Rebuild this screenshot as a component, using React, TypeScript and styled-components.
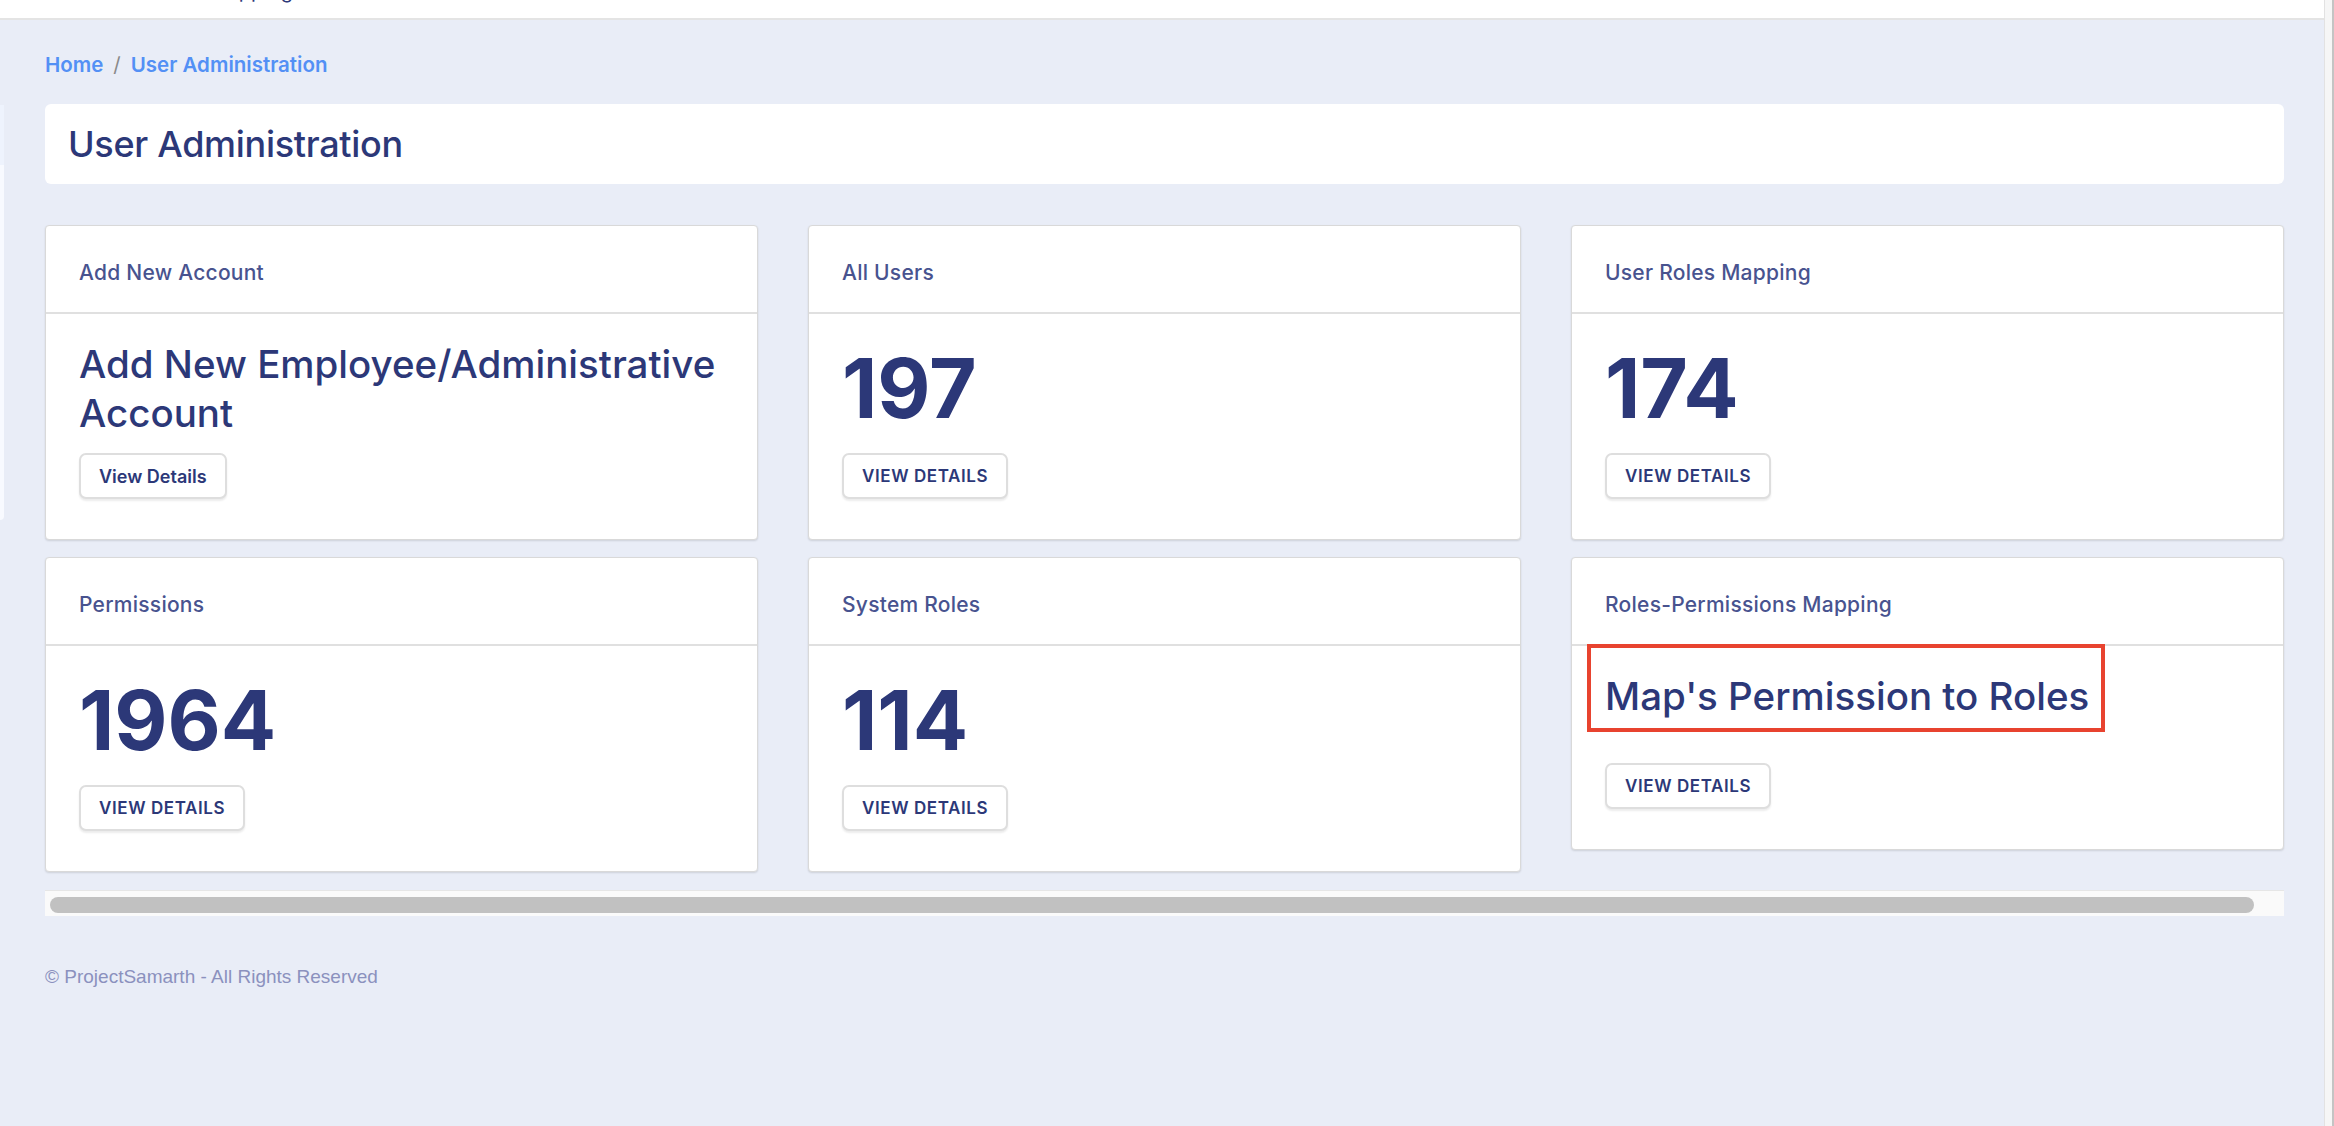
import React from "react";
import styled, { createGlobalStyle } from "styled-components";

const GlobalStyle = createGlobalStyle`
  html, body { margin: 0; padding: 0; }
  body {
    background: #e9edf7;
    font-family: Inter, "Noto Sans", sans-serif;
    overflow: hidden;
  }
  #root { min-height: 100vh; }
`;

const Frame = styled.div`
  display: flex;
  min-height: 100vh;
`;

const PageColumn = styled.div`
  flex: 1;
  min-width: 0;
  display: flex;
  flex-direction: column;
`;

const VScroll = styled.div`
  width: 9px;
  flex-shrink: 0;
  border-left: 1px solid #e2e2e2;
  background: #f6f6f6;
  box-shadow: inset -2px 0 0 #c4c4c4;
`;

const TopBar = styled.header`
  height: 18px;
  background: #ffffff;
  border-bottom: 2px solid #e4e4e4;
  overflow: hidden;
`;

const TopBarText = styled.div`
  font-size: 20px;
  line-height: 20px;
  margin-top: -19px;
  margin-left: -4px;
  color: #2c3878;
  white-space: nowrap;
  letter-spacing: 0.2px;
`;

const Body = styled.div`
  display: flex;
  flex: 1;
`;

const SideEdge = styled.div`
  width: 4px;
  height: 415px;
  margin-top: 85px;
  flex-shrink: 0;
  background: linear-gradient(#eef3fd 0 60px, #f8faff 60px);
  border-radius: 0 0 6px 0;
`;

const Main = styled.main`
  flex: 1;
  min-width: 0;
  padding: 31px 40px 0 41px;
`;

const Breadcrumb = styled.nav`
  display: flex;
  align-items: center;
  gap: 10px;
  font-size: 20.5px;
  line-height: 28px;
  font-weight: 600;
  color: #5390f5;
`;

const Crumb = styled.span``;

const CrumbSep = styled.span`
  color: #8a8a8a;
  font-weight: 400;
`;

const TitleCard = styled.div`
  margin-top: 25px;
  height: 80px;
  padding: 0 23px;
  display: flex;
  align-items: center;
  background: #ffffff;
  border-radius: 6px;
`;

const PageTitle = styled.h1`
  margin: 0;
  font-size: 36px;
  font-weight: 500;
  color: #2c3878;
  letter-spacing: -0.3px;
`;

const Grid = styled.div`
  margin-top: 41px;
  display: grid;
  grid-template-columns: repeat(3, 1fr);
  column-gap: 50px;
  row-gap: 17px;
  align-items: start;
`;

const Card = styled.section`
  background: #ffffff;
  border: 1px solid #d9d9d9;
  border-radius: 4px;
  box-shadow: 0 1px 2px rgba(0, 0, 0, 0.12);
`;

const CardHeader = styled.div`
  padding: 34px 33px 26px;
  line-height: 26px;
  font-size: 21px;
  font-weight: 500;
  letter-spacing: 0.25px;
  color: #48538f;
  border-bottom: 2px solid #e0e0e0;
`;

const CardBody = styled.div`
  padding: 26px 33px 40px;
`;

const BigNumber = styled.div`
  font-size: 82px;
  line-height: 98px;
  font-weight: 700;
  color: #2c3878;
  margin-bottom: 15px;
`;

const CardHeading = styled.h2<{ $gap: number; $marked?: boolean }>`
  position: relative;
  width: fit-content;
  margin: 0 0 ${(p) => p.$gap}px;
  font-size: 38.5px;
  line-height: 49px;
  font-weight: 500;
  color: #2c3878;

  ${(p) =>
    p.$marked &&
    `
    &::after {
      content: "";
      position: absolute;
      top: -28px;
      bottom: -11px;
      left: -18px;
      right: -16px;
      border: 4px solid #e8432f;
      pointer-events: none;
    }
  `}
`;

const DetailsButton = styled.button<{ $upper: boolean }>`
  display: inline-flex;
  align-items: center;
  height: 46px;
  padding: 0 18px;
  background: #ffffff;
  border: 2px solid #dedede;
  border-radius: 7px;
  box-shadow: 0 2px 2px rgba(0, 0, 0, 0.08);
  font-family: Inter, "Noto Sans", sans-serif;
  font-size: ${(p) => (p.$upper ? 17 : 18)}px;
  font-weight: 600;
  letter-spacing: ${(p) => (p.$upper ? 0.6 : 0)}px;
  text-transform: ${(p) => (p.$upper ? "uppercase" : "none")};
  color: #2c3878;
  cursor: pointer;
`;

const HScrollTrack = styled.div`
  margin-top: 18px;
  height: 26px;
  box-sizing: border-box;
  border-top: 1px solid #e6e6e6;
  background: #fafafa;
  padding: 6px 30px 4px 5px;
`;

const HScrollThumb = styled.div`
  height: 16px;
  border-radius: 8px;
  background: #c1c1c1;
`;

const Footer = styled.footer`
  margin-top: 50px;
  font-family: "Liberation Sans", Arial, sans-serif;
  font-size: 19px;
  line-height: 1.2;
  color: #8b91be;
`;

type CardData = {
  title: string;
  value?: string;
  heading?: string;
  headingGap?: number;
  marked?: boolean;
  upper: boolean;
};

const cards: CardData[] = [
  {
    title: "Add New Account",
    heading: "Add New Employee/Administrative Account",
    headingGap: 15,
    upper: false,
  },
  { title: "All Users", value: "197", upper: true },
  { title: "User Roles Mapping", value: "174", upper: true },
  { title: "Permissions", value: "1964", upper: true },
  { title: "System Roles", value: "114", upper: true },
  {
    title: "Roles-Permissions Mapping",
    heading: "Map's Permission to Roles",
    headingGap: 42,
    marked: true,
    upper: true,
  },
];

export default function App() {
  return (
    <>
      <GlobalStyle />
      <Frame>
        <PageColumn>
          <TopBar>
            <TopBarText>portal · Users &amp; Roles Mapping.</TopBarText>
          </TopBar>
          <Body>
            <SideEdge />
            <Main>
              <Breadcrumb>
                <Crumb>Home</Crumb>
                <CrumbSep>/</CrumbSep>
                <Crumb>User Administration</Crumb>
              </Breadcrumb>
              <TitleCard>
                <PageTitle>User Administration</PageTitle>
              </TitleCard>
              <Grid>
                {cards.map((c) => (
                  <Card key={c.title}>
                    <CardHeader>{c.title}</CardHeader>
                    <CardBody>
                      {c.value ? (
                        <BigNumber>{c.value}</BigNumber>
                      ) : (
                        <CardHeading $gap={c.headingGap ?? 15} $marked={c.marked}>
                          {c.heading}
                        </CardHeading>
                      )}
                      <DetailsButton $upper={c.upper}>View Details</DetailsButton>
                    </CardBody>
                  </Card>
                ))}
              </Grid>
              <HScrollTrack>
                <HScrollThumb />
              </HScrollTrack>
              <Footer>© ProjectSamarth - All Rights Reserved</Footer>
            </Main>
          </Body>
        </PageColumn>
        <VScroll />
      </Frame>
    </>
  );
}
